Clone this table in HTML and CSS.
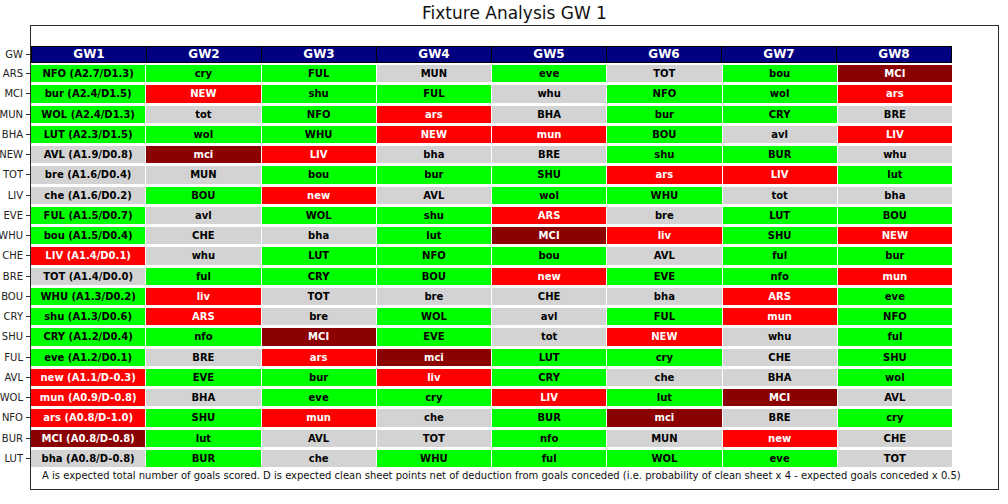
FILE: index.html
```html
<!DOCTYPE html>
<html lang="en">
<head>
<meta charset="utf-8">
<title>Fixture Analysis GW 1</title>
<link rel="stylesheet" href="styles.css">
</head>
<body>
<div class="figure">
  <h1 class="title">Fixture Analysis GW 1</h1>
  <div class="chart">
    <div class="labels">
      <div class="label head-label">GW<span class="tick"></span></div>
      <div class="label-rows">
        <div class="label">ARS<span class="tick"></span></div>
        <div class="label">MCI<span class="tick"></span></div>
        <div class="label">MUN<span class="tick"></span></div>
        <div class="label">BHA<span class="tick"></span></div>
        <div class="label">NEW<span class="tick"></span></div>
        <div class="label">TOT<span class="tick"></span></div>
        <div class="label">LIV<span class="tick"></span></div>
        <div class="label">EVE<span class="tick"></span></div>
        <div class="label">WHU<span class="tick"></span></div>
        <div class="label">CHE<span class="tick"></span></div>
        <div class="label">BRE<span class="tick"></span></div>
        <div class="label">BOU<span class="tick"></span></div>
        <div class="label">CRY<span class="tick"></span></div>
        <div class="label">SHU<span class="tick"></span></div>
        <div class="label">FUL<span class="tick"></span></div>
        <div class="label">AVL<span class="tick"></span></div>
        <div class="label">WOL<span class="tick"></span></div>
        <div class="label">NFO<span class="tick"></span></div>
        <div class="label">BUR<span class="tick"></span></div>
        <div class="label">LUT<span class="tick"></span></div>
      </div>
    </div>
    <div class="frame">
      <div class="header">
        <div class="hcell">GW1</div><div class="hcell">GW2</div><div class="hcell">GW3</div><div class="hcell">GW4</div>
        <div class="hcell">GW5</div><div class="hcell">GW6</div><div class="hcell">GW7</div><div class="hcell">GW8</div>
      </div>
      <div class="grid">
        <div class="c g">NFO (A2.7/D1.3)</div><div class="c g">cry</div><div class="c g">FUL</div><div class="c n">MUN</div><div class="c g">eve</div><div class="c n">TOT</div><div class="c g">bou</div><div class="c d">MCI</div>
        <div class="c g">bur (A2.4/D1.5)</div><div class="c r">NEW</div><div class="c g">shu</div><div class="c g">FUL</div><div class="c n">whu</div><div class="c g">NFO</div><div class="c g">wol</div><div class="c r">ars</div>
        <div class="c g">WOL (A2.4/D1.3)</div><div class="c n">tot</div><div class="c g">NFO</div><div class="c r">ars</div><div class="c n">BHA</div><div class="c g">bur</div><div class="c g">CRY</div><div class="c n">BRE</div>
        <div class="c g">LUT (A2.3/D1.5)</div><div class="c g">wol</div><div class="c g">WHU</div><div class="c r">NEW</div><div class="c r">mun</div><div class="c g">BOU</div><div class="c n">avl</div><div class="c r">LIV</div>
        <div class="c n">AVL (A1.9/D0.8)</div><div class="c d">mci</div><div class="c r">LIV</div><div class="c n">bha</div><div class="c n">BRE</div><div class="c g">shu</div><div class="c g">BUR</div><div class="c n">whu</div>
        <div class="c n">bre (A1.6/D0.4)</div><div class="c n">MUN</div><div class="c g">bou</div><div class="c g">bur</div><div class="c g">SHU</div><div class="c r">ars</div><div class="c r">LIV</div><div class="c g">lut</div>
        <div class="c n">che (A1.6/D0.2)</div><div class="c g">BOU</div><div class="c r">new</div><div class="c n">AVL</div><div class="c g">wol</div><div class="c g">WHU</div><div class="c n">tot</div><div class="c n">bha</div>
        <div class="c g">FUL (A1.5/D0.7)</div><div class="c n">avl</div><div class="c g">WOL</div><div class="c g">shu</div><div class="c r">ARS</div><div class="c n">bre</div><div class="c g">LUT</div><div class="c g">BOU</div>
        <div class="c g">bou (A1.5/D0.4)</div><div class="c n">CHE</div><div class="c n">bha</div><div class="c g">lut</div><div class="c d">MCI</div><div class="c r">liv</div><div class="c g">SHU</div><div class="c r">NEW</div>
        <div class="c r">LIV (A1.4/D0.1)</div><div class="c n">whu</div><div class="c g">LUT</div><div class="c g">NFO</div><div class="c g">bou</div><div class="c n">AVL</div><div class="c g">ful</div><div class="c g">bur</div>
        <div class="c n">TOT (A1.4/D0.0)</div><div class="c g">ful</div><div class="c g">CRY</div><div class="c g">BOU</div><div class="c r">new</div><div class="c g">EVE</div><div class="c g">nfo</div><div class="c r">mun</div>
        <div class="c g">WHU (A1.3/D0.2)</div><div class="c r">liv</div><div class="c n">TOT</div><div class="c n">bre</div><div class="c n">CHE</div><div class="c n">bha</div><div class="c r">ARS</div><div class="c g">eve</div>
        <div class="c g">shu (A1.3/D0.6)</div><div class="c r">ARS</div><div class="c n">bre</div><div class="c g">WOL</div><div class="c n">avl</div><div class="c g">FUL</div><div class="c r">mun</div><div class="c g">NFO</div>
        <div class="c g">CRY (A1.2/D0.4)</div><div class="c g">nfo</div><div class="c d">MCI</div><div class="c g">EVE</div><div class="c n">tot</div><div class="c r">NEW</div><div class="c n">whu</div><div class="c g">ful</div>
        <div class="c g">eve (A1.2/D0.1)</div><div class="c n">BRE</div><div class="c r">ars</div><div class="c d">mci</div><div class="c g">LUT</div><div class="c g">cry</div><div class="c n">CHE</div><div class="c g">SHU</div>
        <div class="c r">new (A1.1/D-0.3)</div><div class="c g">EVE</div><div class="c g">bur</div><div class="c r">liv</div><div class="c g">CRY</div><div class="c n">che</div><div class="c n">BHA</div><div class="c g">wol</div>
        <div class="c r">mun (A0.9/D-0.8)</div><div class="c n">BHA</div><div class="c g">eve</div><div class="c g">cry</div><div class="c r">LIV</div><div class="c g">lut</div><div class="c d">MCI</div><div class="c n">AVL</div>
        <div class="c r">ars (A0.8/D-1.0)</div><div class="c g">SHU</div><div class="c r">mun</div><div class="c n">che</div><div class="c g">BUR</div><div class="c d">mci</div><div class="c n">BRE</div><div class="c g">cry</div>
        <div class="c d">MCI (A0.8/D-0.8)</div><div class="c g">lut</div><div class="c n">AVL</div><div class="c n">TOT</div><div class="c g">nfo</div><div class="c n">MUN</div><div class="c r">new</div><div class="c n">CHE</div>
        <div class="c n">bha (A0.8/D-0.8)</div><div class="c g">BUR</div><div class="c n">che</div><div class="c g">WHU</div><div class="c g">ful</div><div class="c g">WOL</div><div class="c g">eve</div><div class="c n">TOT</div>
      </div>
      <p class="note">A is expected total number of goals scored. D is expected clean sheet points net of deduction from goals conceded (i.e. probability of clean sheet x 4 - expected goals conceded x 0.5)</p>
    </div>
  </div>
</div>
</body>
</html>
```

FILE: styles.css
```css
* { box-sizing: border-box; }

html, body {
  margin: 0;
  padding: 0;
  background: #ffffff;
}

body {
  font-family: "DejaVu Sans", "Liberation Sans", sans-serif;
  color: #000;
  width: 1008px;
  height: 504px;
  overflow: hidden;
}

.title {
  margin: 0;
  padding: 3px 0 2px 30px;
  width: 999px;
  height: 25px;
  font-size: 17px;
  line-height: 20px;
  font-weight: normal;
  text-align: center;
  color: #111;
}

.chart {
  display: flex;
}

.labels {
  width: 30px;
  padding-top: 21px;
  display: flex;
  flex-direction: column;
}

.label {
  display: flex;
  align-items: center;
  justify-content: flex-end;
  font-size: 10px;
  color: #222;
  height: 17.25px;
  white-space: nowrap;
}

.head-label {
  height: 17px;
}

.label-rows {
  margin-top: 2px;
  display: flex;
  flex-direction: column;
  gap: 3px;
}

.tick {
  display: block;
  flex: none;
  width: 4px;
  height: 1px;
  margin-left: 3px;
  background: #333;
}

.frame {
  width: 969px;
  height: 465px;
  border: 1px solid #2a2a2a;
  padding-top: 20px;
}

.header {
  width: 921px;
  height: 17px;
  display: grid;
  grid-template-columns: repeat(8, 1fr);
  column-gap: 1px;
  background: #000;
  border: 1px solid #000;
}

.hcell {
  background: #000080;
  color: #fff;
  font-weight: bold;
  font-size: 12px;
  line-height: 15px;
  text-align: center;
}

.grid {
  margin-top: 2px;
  width: 921px;
  display: grid;
  grid-template-columns: repeat(8, 1fr);
  grid-auto-rows: 17.25px;
  column-gap: 1px;
  row-gap: 3px;
}

.c {
  display: flex;
  align-items: center;
  justify-content: center;
  font-weight: bold;
  font-size: 10px;
  white-space: nowrap;
}

.g { background: #00ff00; color: #000; }
.n { background: #d3d3d3; color: #000; }
.r { background: #ff0000; color: #fff; }
.d { background: #8b0000; color: #fff; }

.note {
  margin: 2px 0 0 0;
  padding-left: 11px;
  font-size: 10px;
  line-height: 14px;
  color: #111;
  white-space: nowrap;
}
```
